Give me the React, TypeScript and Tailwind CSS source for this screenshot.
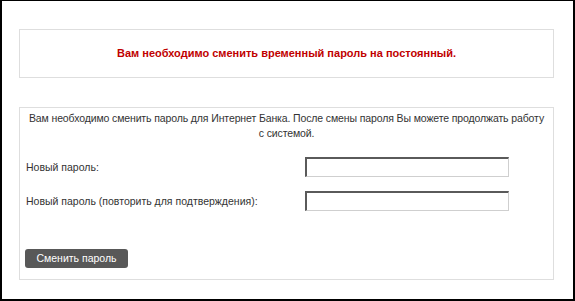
import React from "react";

export default function App() {
  return (
    <div
      className="w-[575px] h-[301px] bg-white border-black border-t border-l-2 border-r-2 border-b-2 pt-[28px] pl-[17px] pr-[19px] text-[10.5px] text-[#333333]"
      style={{ fontFamily: '"Liberation Sans", Arial, sans-serif' }}
    >
      <div className="h-[49px] border border-[#dedede] flex items-center justify-center font-bold text-[#c00000] text-[11px]">
        Вам необходимо сменить временный пароль на постоянный.
      </div>
      <div className="mt-[29px] h-[173px] border border-[#dedede] px-[6px] pt-[3px]">
        <p className="-mx-[3px] text-center leading-[15px] tracking-[-0.12px] whitespace-nowrap">
          Вам необходимо сменить пароль для Интернет Банка. После смены пароля Вы можете продолжать работу
          <br />
          с системой.
        </p>
        <div className="mt-[16px] grid grid-cols-[279px_204px] gap-y-[14px] items-center">
          <label className="leading-[20px]">Новый пароль:</label>
          <input
            type="password"
            className="h-[20px] w-[204px] bg-white border-t-2 border-l-2 border-r border-b border-t-[#5a5a5a] border-l-[#5a5a5a] border-r-[#cfcfcf] border-b-[#cfcfcf] outline-none"
          />
          <label className="leading-[20px]">Новый пароль (повторить для подтверждения):</label>
          <input
            type="password"
            className="h-[20px] w-[204px] bg-white border-t-2 border-l-2 border-r border-b border-t-[#5a5a5a] border-l-[#5a5a5a] border-r-[#cfcfcf] border-b-[#cfcfcf] outline-none"
          />
        </div>
        <button className="mt-[38px] -ml-[1px] h-[19px] w-[103px] bg-[#585858] rounded-[3px] text-white text-[10.5px] leading-[19px] text-center">
          Сменить пароль
        </button>
      </div>
    </div>
  );
}
